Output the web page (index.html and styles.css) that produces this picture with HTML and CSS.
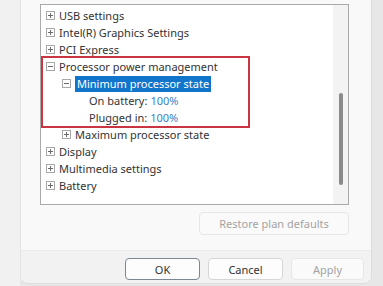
FILE: index.html
```html
<!DOCTYPE html>
<html lang="en">
<head>
    <meta charset="UTF-8">
    <title>Power Options - Advanced settings</title>
    <link rel="stylesheet" href="styles.css">
</head>
<body>
    <div class="dialog">
        <div class="content">
            <div class="listbox">
                <div class="tree">
                    <div class="row lvl0"><span class="box plus"></span>USB settings</div>
                    <div class="row lvl0"><span class="box plus"></span>Intel(R) Graphics Settings</div>
                    <div class="row lvl0"><span class="box plus"></span>PCI Express</div>
                    <!-- выделенная группа -->
                    <div class="group">
                        <div class="row lvl0"><span class="box minus"></span>Processor power management</div>
                        <div class="row lvl1"><span class="box minus"></span><span class="selected">Minimum processor state</span></div>
                        <div class="row lvl2">On battery: <span class="value">100%</span></div>
                        <div class="row lvl2">Plugged in: <span class="value">100%</span></div>
                    </div>
                    <div class="row lvl1"><span class="box plus"></span>Maximum processor state</div>
                    <div class="row lvl0"><span class="box plus"></span>Display</div>
                    <div class="row lvl0"><span class="box plus"></span>Multimedia settings</div>
                    <div class="row lvl0"><span class="box plus"></span>Battery</div>
                </div>
                <div class="scrollbar">
                    <div class="thumb"></div>
                </div>
            </div>
            <div class="restore-row">
                <button class="btn restore" disabled>Restore plan defaults</button>
            </div>
        </div>
        <div class="footer">
            <button class="btn default">OK</button>
            <button class="btn">Cancel</button>
            <button class="btn" disabled>Apply</button>
        </div>
    </div>
</body>
</html>
```

FILE: styles.css
```css
body {
    margin: 0;
    width: 383px;
    height: 286px;
    overflow: hidden;
    background: linear-gradient(90deg, #f1f1f1 0, #f1f1f1 20px, #e7e7e7 20px);
    font-family: "Noto Sans", "Liberation Sans", sans-serif;
    font-size: 11px;
    color: #333;
}

.dialog {
    margin-left: 20px;
    width: 350px;
    height: 283px;
    background-color: #f9f9f9;
    border-left: 1px solid #e3e3e3;
    border-right: 1px solid #dcdcdc;
    border-bottom: 1px solid #dcdcdc;
    border-radius: 0 0 8px 8px;
    display: flex;
    flex-direction: column;
    overflow: hidden;
}

.content {
    height: 250px;
    padding: 4px 0 0 19px;
    box-sizing: border-box;
}

.listbox {
    width: 309px;
    height: 201px;
    box-sizing: border-box;
    border: 1px solid #a9a9a9;
    background-color: #fff;
    display: flex;
}

.tree {
    flex: 1;
    padding-top: 2px;
}

.row {
    height: 17px;
    line-height: 17px;
    display: flex;
    align-items: center;
    white-space: nowrap;
}

.lvl0 { padding-left: 5px; }
.lvl1 { padding-left: 21px; }
.lvl2 { padding-left: 48px; }

.group {
    margin-left: 2px;
    width: 205px;
    outline: 2px solid #c93540;
}

.group .lvl0 { padding-left: 3px; }
.group .lvl1 { padding-left: 19px; }
.group .lvl2 { padding-left: 46px; }

/* квадратик +/- у узла дерева */
.box {
    position: relative;
    width: 7px;
    height: 7px;
    border: 1px solid #a8a8a8;
    margin-right: 4px;
    flex-shrink: 0;
}

.box::before {
    content: "";
    position: absolute;
    left: 1px;
    top: 3px;
    width: 5px;
    height: 1px;
    background-color: #6a6a6a;
}

.plus::after {
    content: "";
    position: absolute;
    left: 3px;
    top: 1px;
    width: 1px;
    height: 5px;
    background-color: #6a6a6a;
}

.selected {
    background-color: #1275cc;
    color: #fff;
    padding: 0 2px;
    line-height: 16px;
}

.value {
    color: #3a82c6;
    margin-left: 3px;
}

.scrollbar {
    width: 15px;
    background-color: #f3f3f3;
    display: flex;
    justify-content: center;
}

.thumb {
    margin-top: 88px;
    width: 4px;
    height: 92px;
    border-radius: 2px;
    background-color: #8a8a8a;
}

.restore-row {
    width: 309px;
    display: flex;
    justify-content: flex-end;
    margin-top: 7px;
}

.btn {
    height: 23px;
    box-sizing: border-box;
    border: 1px solid #d6d6d6;
    border-radius: 4px;
    background-color: #fdfdfd;
    font-family: "Noto Sans", "Liberation Sans", sans-serif;
    font-size: 11px;
    color: #333;
    padding: 0;
}

.btn:disabled {
    color: #a3a3a3;
    border-color: #e6e6e6;
    background-color: #fafafa;
}

.restore {
    width: 150px;
}

.footer {
    flex: 1;
    background-color: #f2f2f2;
    border-top: 1px solid #ebebeb;
    display: flex;
    justify-content: flex-end;
    align-items: flex-start;
    gap: 8px;
    padding: 7px 7px 0 0;
}

.footer .btn {
    width: 75px;
    height: 22px;
}

.footer .btn:disabled {
    width: 73px;
}

.default {
    border-color: #7b8894;
}
```
